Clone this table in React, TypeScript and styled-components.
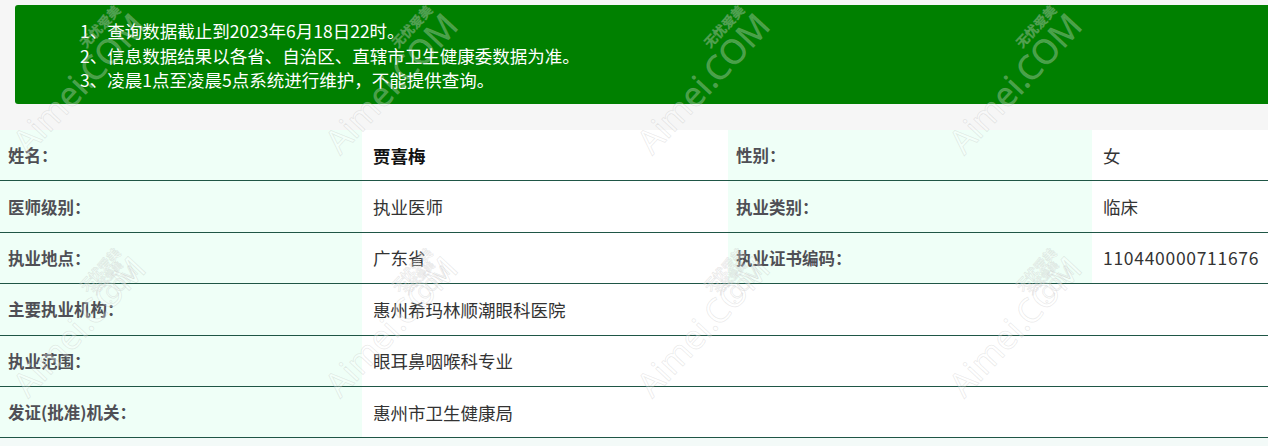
import React from "react";
import styled, { createGlobalStyle } from "styled-components";

const Global = createGlobalStyle`
  html, body { margin: 0; padding: 0; }
  body {
    background: #f6f6f6;
    font-family: "Noto Sans CJK SC", "Noto Sans", sans-serif;
    overflow: hidden;
  }
`;

const Page = styled.div`
  position: relative;
  width: 1268px;
  height: 446px;
  overflow: hidden;
  background: #f6f6f6;
`;

const Notice = styled.div`
  margin: 5px -20px 0 15px;
  height: 99px;
  box-sizing: border-box;
  background: #008000;
  border-radius: 3px;
  padding: 14px 0 0 65px;
  color: #ffffff;
  font-size: 17.5px;
  line-height: 24.5px;
`;

const NoticeLine = styled.div`
  white-space: nowrap;
`;

const Table = styled.div`
  margin-top: 26px;
  display: grid;
  grid-template-columns: 362px 366px 364px 1fr;
  background: #ffffff;
`;

const Cell = styled.div<{ $label?: boolean; $span?: number; $strong?: boolean }>`
  grid-column: span ${(p) => p.$span ?? 1};
  height: 51.4px;
  box-sizing: border-box;
  border-bottom: 1px solid #1f5646;
  display: flex;
  align-items: center;
  padding-left: ${(p) => (p.$label ? "8px" : "11px")};
  background: ${(p) => (p.$label ? "#effff7" : "#ffffff")};
  color: ${(p) => (p.$label ? "#4f4f55" : p.$strong ? "#111111" : "#333333")};
  font-size: ${(p) => (p.$label ? "16.5px" : "17.5px")};
  font-weight: ${(p) => (p.$label || p.$strong ? 700 : 400)};
  white-space: nowrap;
`;

const Digits = styled.span`
  letter-spacing: 0.7px;
`;

const Below = styled.div`
  height: 20px;
  background: #f3faf8;
`;

const Mark = styled.div`
  position: absolute;
  pointer-events: none;
  transform: rotate(-47deg);
  transform-origin: center;
  font-family: "Noto Sans", "Noto Sans CJK SC", sans-serif;
  color: rgba(255, 255, 255, 0.3);
  -webkit-text-stroke: 0.8px rgba(160, 160, 160, 0.22);
  line-height: 1;
  display: flex;
  flex-direction: column;
  align-items: flex-end;
  white-space: nowrap;
`;

const MarkTop = styled.span<{ $size: number }>`
  font-size: ${(p) => p.$size}px;
  font-family: "Noto Sans CJK SC", sans-serif;
  font-weight: 700;
  margin-right: 6px;
`;

const MarkMain = styled.span<{ $size: number }>`
  font-size: ${(p) => p.$size}px;
  font-weight: 400;
`;

type Row = { label: string; value: string; label2?: string; value2?: string; strong?: boolean };

const rows: Row[] = [
  { label: "姓名：", value: "贾喜梅", label2: "性别：", value2: "女", strong: true },
  { label: "医师级别：", value: "执业医师", label2: "执业类别：", value2: "临床" },
  { label: "执业地点：", value: "广东省", label2: "执业证书编码：", value2: "110440000711676" },
  { label: "主要执业机构：", value: "惠州希玛林顺潮眼科医院" },
  { label: "执业范围：", value: "眼耳鼻咽喉科专业" },
  { label: "发证(批准)机关：", value: "惠州市卫生健康局" },
];

const bigMarks = [0, 1, 2, 3].flatMap((i) => [
  { x: -14 + 312 * i, y: 55 },
  { x: -14 + 312 * i, y: 298 },
]);
const smallMarks = [0, 1, 2, 3].map((i) => ({ x: 92 + 312 * i, y: 268 }));

const renderValue = (v: string) => (/^\d+$/.test(v) ? <Digits>{v}</Digits> : v);

export default function App() {
  return (
    <Page>
      <Global />
      <Notice>
        <NoticeLine>1、查询数据截止到2023年6月18日22时。</NoticeLine>
        <NoticeLine>2、信息数据结果以各省、自治区、直辖市卫生健康委数据为准。</NoticeLine>
        <NoticeLine>3、凌晨1点至凌晨5点系统进行维护，不能提供查询。</NoticeLine>
      </Notice>
      <Table>
        {rows.map((r) =>
          r.label2 ? (
            <React.Fragment key={r.label}>
              <Cell $label>{r.label}</Cell>
              <Cell $strong={r.strong}>{r.value}</Cell>
              <Cell $label>{r.label2}</Cell>
              <Cell>{renderValue(r.value2 ?? "")}</Cell>
            </React.Fragment>
          ) : (
            <React.Fragment key={r.label}>
              <Cell $label>{r.label}</Cell>
              <Cell $span={3}>{r.value}</Cell>
            </React.Fragment>
          )
        )}
      </Table>
      <Below />
      {bigMarks.map((m, i) => (
        <Mark key={"b" + i} style={{ left: m.x, top: m.y }}>
          <MarkTop $size={13}>无忧爱美</MarkTop>
          <MarkMain $size={34}>Aimei.COM</MarkMain>
        </Mark>
      ))}
      {smallMarks.map((m, i) => (
        <Mark key={"s" + i} style={{ left: m.x, top: m.y }}>
          <MarkTop $size={10}>无忧爱美</MarkTop>
          <MarkMain $size={17}>.COM</MarkMain>
        </Mark>
      ))}
    </Page>
  );
}
